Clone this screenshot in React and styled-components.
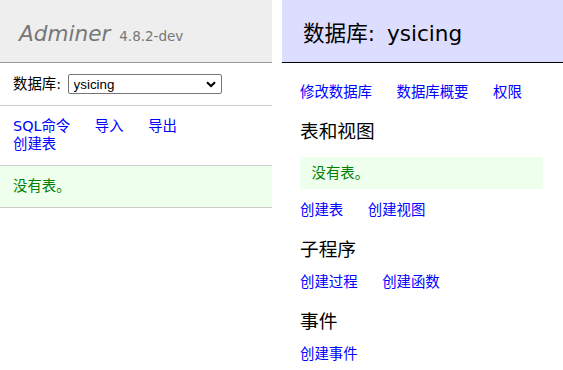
import React from "react";
import styled, { createGlobalStyle } from "styled-components";

const Global = createGlobalStyle`
  html, body { margin: 0; padding: 0; background: #fff; }
  body {
    font-family: "DejaVu Sans", "Noto Sans CJK SC", sans-serif;
    font-size: 14.4px;
    line-height: 18px;
    color: #000;
  }
`;

const Page = styled.div`
  display: flex;
  align-items: flex-start;
  width: 563px;
  min-height: 370px;
  overflow: hidden;
`;

const Menu = styled.nav`
  width: 272px;
  flex: 0 0 272px;
`;

const Brand = styled.h1`
  margin: 0;
  height: 62px;
  box-sizing: border-box;
  padding: 20px 19px 0;
  font-size: 21.6px;
  line-height: 27px;
  font-weight: normal;
  background: #eee;
  border-bottom: 1px solid #999;
  color: #777;
  box-sizing: content-box;
  height: 42px;
`;

const BrandName = styled.a`
  color: #777;
  font-style: italic;
  text-decoration: none;
`;

const Version = styled.span`
  color: #777;
  font-size: 13.5px;
  margin-left: 2px;
`;

const DbRow = styled.form`
  display: flex;
  align-items: center;
  margin: 0;
  padding: 11px 13px;
  border-bottom: 1px solid #ccc;
  white-space: pre;
`;

const SelectWrap = styled.span`
  position: relative;
  display: inline-block;
  margin-left: 2px;
`;

const Select = styled.select`
  appearance: none;
  -webkit-appearance: none;
  display: block;
  width: 154px;
  height: 20px;
  box-sizing: border-box;
  margin: 0;
  padding: 0 0 0 5px;
  font-family: "Liberation Sans", Arial, sans-serif;
  font-size: 13.33px;
  color: #000;
  background: #fff;
  border: 1px solid #767676;
  border-radius: 2px;
`;

const Chevron = styled.svg`
  position: absolute;
  right: 6px;
  top: 7px;
  pointer-events: none;
`;

const MenuSection = styled.p`
  margin: 0;
  padding: 11px 13px 12px;
  border-bottom: 1px solid #ccc;
  color: ${(p) => (p.$message ? "green" : "inherit")};
  background: ${(p) => (p.$message ? "#efe" : "transparent")};
`;

const Link = styled.a`
  color: blue;
  text-decoration: none;
  white-space: nowrap;
  margin-right: 20px;
  cursor: pointer;
`;

const Content = styled.main`
  flex: 1;
  margin-left: 10px;
`;

const Title = styled.h2`
  margin: 0;
  padding: 20px 21px 15px;
  font-size: 21.6px;
  line-height: 27px;
  font-weight: normal;
  color: #000;
  background: #ddf;
  border-bottom: 1px solid #000;
`;

const Colon = styled.span`
  margin-right: 5px;
`;

const Body = styled.div`
  padding: 0 20px 0 18px;
`;

const Links = styled.p`
  margin: ${(p) => (p.$first ? "20px" : "12px")} 0 0;
`;

const Heading = styled.h3`
  margin: 19px 0 0;
  font-size: 18.7px;
  line-height: 23px;
  font-weight: normal;
  color: #000;
`;

const Message = styled.div`
  margin: 14px 0 0;
  padding: 7px 11.5px;
  color: green;
  background: #efe;
`;

export default function App() {
  return (
    <>
      <Global />
      <Page>
        <Menu>
          <Brand>
            <BrandName href="#">Adminer</BrandName> <Version>4.8.2-dev</Version>
          </Brand>
          <DbRow>
            数据库:{" "}
            <SelectWrap>
              <Select defaultValue="ysicing">
                <option value="ysicing">ysicing</option>
              </Select>
              <Chevron width="10" height="7" viewBox="0 0 10 7">
                <path d="M1 1.2 L5 5 L9 1.2" fill="none" stroke="#000" strokeWidth="2" />
              </Chevron>
            </SelectWrap>
          </DbRow>
          <MenuSection>
            <Link>SQL命令</Link> <Link>导入</Link> <Link>导出</Link>
            <br />
            <Link>创建表</Link>
          </MenuSection>
          <MenuSection $message>没有表。</MenuSection>
        </Menu>
        <Content>
          <Title>
            数据库<Colon>:</Colon> ysicing
          </Title>
          <Body>
            <Links $first>
              <Link>修改数据库</Link> <Link>数据库概要</Link> <Link>权限</Link>
            </Links>
            <Heading>表和视图</Heading>
            <Message>没有表。</Message>
            <Links>
              <Link>创建表</Link> <Link>创建视图</Link>
            </Links>
            <Heading>子程序</Heading>
            <Links>
              <Link>创建过程</Link> <Link>创建函数</Link>
            </Links>
            <Heading>事件</Heading>
            <Links>
              <Link>创建事件</Link>
            </Links>
          </Body>
        </Content>
      </Page>
    </>
  );
}
